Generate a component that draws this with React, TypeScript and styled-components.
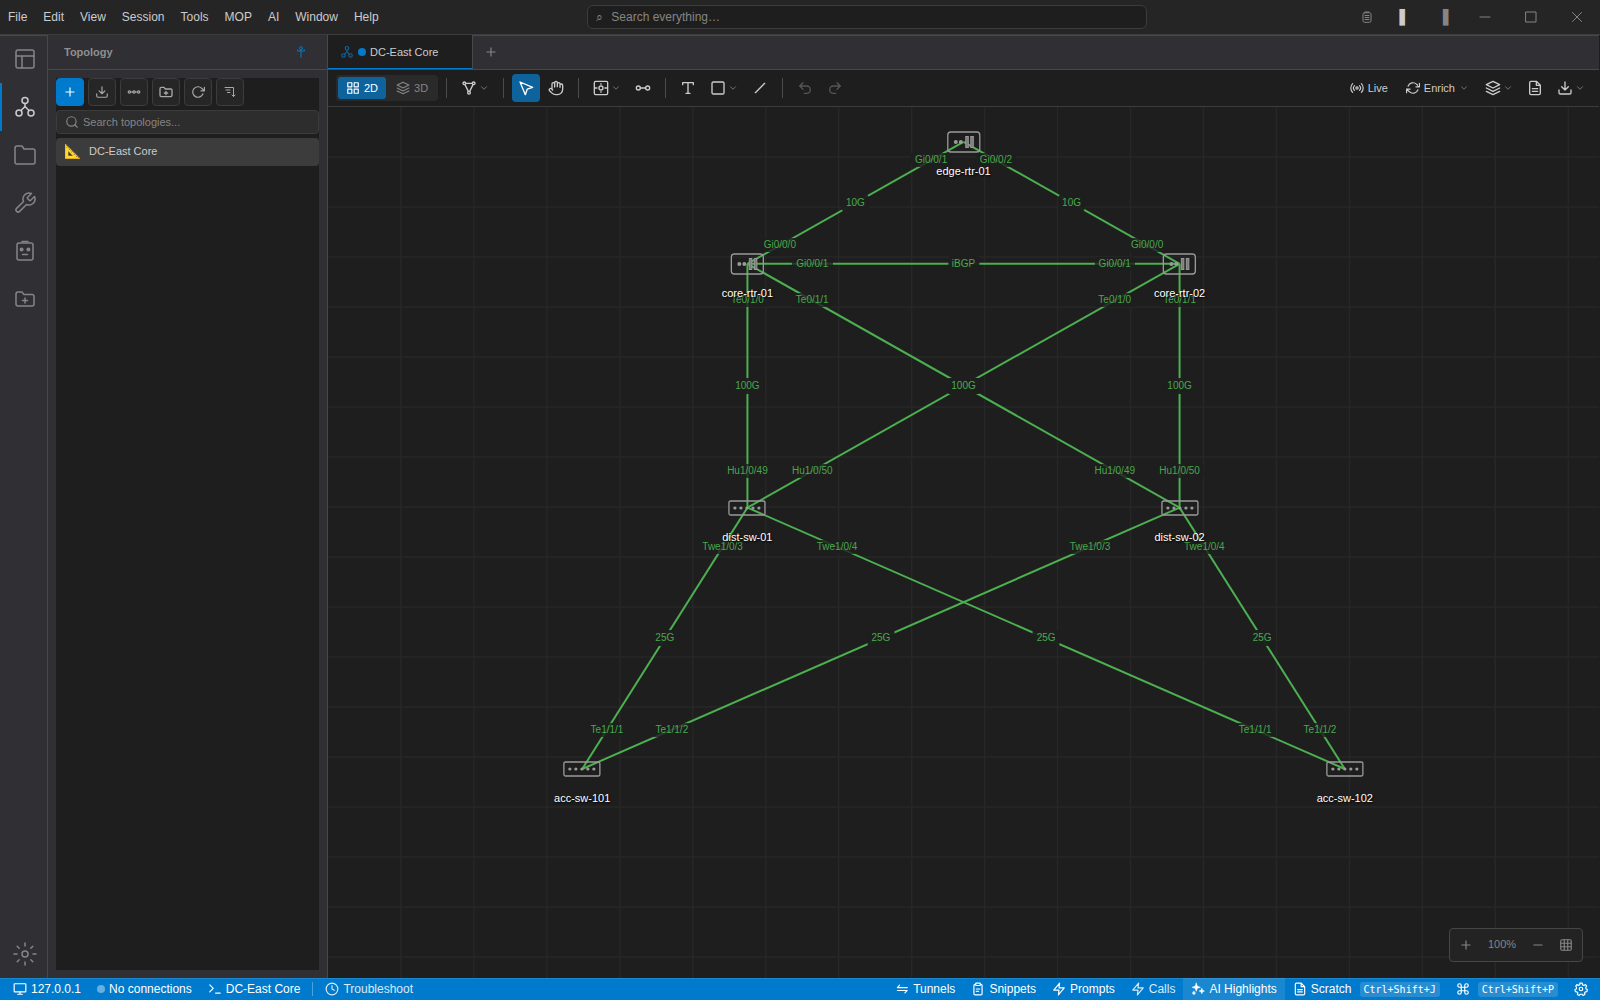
import React from "react";
import styled, { createGlobalStyle, css } from "styled-components";

const c = {
  bg: "#1e1e1e",
  title: "#252526",
  panel: "#302f34",
  line: "#48484b",
  control: "#2d2d2d",
  controlLine: "#3c3c3c",
  text: "#cccccc",
  muted: "#858585",
  accent: "#007acc",
  active: "#0e639c",
  link: "#4caf50",
};

const Global = createGlobalStyle`
  *, *::before, *::after { box-sizing: border-box; }
  html, body { margin: 0; background: ${c.bg}; }
  body, button, input { font-family: "Liberation Sans", Arial, sans-serif; }
  button { margin: 0; padding: 0; border: 0; background: none; color: inherit; cursor: pointer; }
`;

/* ---------- icons ---------- */

const Svg = styled.svg<{ $size: number; $w: number }>`
  display: block;
  flex: none;
  width: ${(p) => p.$size}px;
  height: ${(p) => p.$size}px;
  fill: none;
  stroke: currentColor;
  stroke-width: ${(p) => p.$w};
  stroke-linecap: round;
  stroke-linejoin: round;
`;

const shapes: Record<string, React.ReactNode> = {
  layout: <><rect x="3" y="3" width="18" height="18" rx="2" /><path d="M3 9h18M9 9v12" /></>,
  topology: <><circle cx="12" cy="5.5" r="3" /><circle cx="6" cy="18" r="3" /><circle cx="18" cy="18" r="3" /><path d="M12 8.5v3l-4 4M12 11.5l4 4" /></>,
  folder: <path d="M22 19a2 2 0 0 1-2 2H4a2 2 0 0 1-2-2V5a2 2 0 0 1 2-2h5l2 3h9a2 2 0 0 1 2 2z" />,
  wrench: <path d="M14.7 6.3a1 1 0 0 0 0 1.4l1.6 1.6a1 1 0 0 0 1.4 0l3.77-3.77a6 6 0 0 1-7.94 7.94l-6.91 6.91a2.12 2.12 0 0 1-3-3l6.91-6.91a6 6 0 0 1 7.94-7.94l-3.76 3.76z" />,
  robot: <><rect x="4" y="4" width="16" height="17" rx="2" /><path d="M9 2.5h6M9.5 15.5h5" /><circle cx="8.6" cy="10.5" r="1.3" fill="currentColor" /><circle cx="15.4" cy="10.5" r="1.3" fill="currentColor" /></>,
  folderPlus: <><path d="M21 17a2 2 0 0 1-2 2H5a2 2 0 0 1-2-2V7a2 2 0 0 1 2-2h4l2 2.5h8a2 2 0 0 1 2 2z" /><path d="M12 11v5M9.5 13.5h5" /></>,
  sun: <><circle cx="12" cy="12" r="3" /><path d="M12 1v3M12 20v3M1 12h3M20 12h3M4.2 4.2l2 2M17.8 17.8l2 2M4.2 19.8l2-2M17.8 6.2l2-2" /></>,
  pin: <><circle cx="12" cy="4.500" r="3" /><path d="M12 8v15M5 8v2h14V8" /></>,
  plus: <path d="M12 5v14M5 12h14" />,
  minus: <path d="M5 12h14" />,
  download: <path d="M21 15v4a2 2 0 0 1-2 2H5a2 2 0 0 1-2-2v-4M7 10l5 5 5-5M12 15V3" />,
  chain: <><circle cx="4" cy="12" r="2" /><circle cx="12" cy="12" r="2" /><circle cx="20" cy="12" r="2" /><path d="M6 12h4M14 12h4" /></>,
  refresh: <path d="M23 4v6h-6M20.49 15a9 9 0 1 1-2.12-9.36L23 10" />,
  sort: <path d="M2 3h17v18M4 8h8M7 13h5M16 18l3 3 3-3" />,
  search: <><circle cx="11" cy="11" r="8" /><path d="m21 21-4.3-4.3" /></>,
  grid4: <><rect x="3" y="3" width="7" height="7" /><rect x="14" y="3" width="7" height="7" /><rect x="14" y="14" width="7" height="7" /><rect x="3" y="14" width="7" height="7" /></>,
  layers: <path d="M12 2 2 7l10 5 10-5zM2 17l10 5 10-5M2 12l10 5 10-5" />,
  triangle: <><circle cx="5" cy="5" r="2" /><circle cx="19" cy="5" r="2" /><circle cx="12" cy="19" r="2" /><path d="M7 5h10M6 7l5 10M18 7l-5 10" /></>,
  chevron: <path d="m6 9 6 6 6-6" />,
  pointer: <path d="m3 3 8 19 2.800-8.200L22 11z" />,
  hand: <path d="M18 11V6a2 2 0 0 0-4 0M14 10V4a2 2 0 0 0-4 0v2M10 10.5V6a2 2 0 0 0-4 0v8M18 8a2 2 0 1 1 4 0v6a8 8 0 0 1-8 8h-2c-2.8 0-4.5-.86-5.99-2.34l-3.6-3.6a2 2 0 0 1 2.83-2.82L7 15" />,
  device: <><rect x="2" y="2" width="20" height="20" rx="2" /><circle cx="12" cy="12" r="3" /><path d="M12 5.500v1M12 17.500v1M3 12h3M18 12h3" /></>,
  connector: <><circle cx="5" cy="12" r="3" /><circle cx="19" cy="12" r="3" /><path d="M8 12h8" /></>,
  text: <path d="M4 7V4h16v3M9 20h6M12 4v16" />,
  square: <rect x="3" y="3" width="18" height="18" rx="2" />,
  line: <path d="M5 19 19 5" />,
  undoArrow: <path d="M9 14 4 9l5-5M4 9h10.5a5.5 5.5 0 0 1 0 11H11" />,
  redoArrow: <path d="m15 14 5-5-5-5M20 9H9.5a5.5 5.5 0 0 0 0 11H13" />,
  live: <><circle cx="12" cy="12" r="2" /><path d="M16.2 7.8a6 6 0 0 1 0 8.4M7.8 16.2a6 6 0 0 1 0-8.4M19.5 4.5a10.6 10.6 0 0 1 0 15M4.5 19.5a10.6 10.6 0 0 1 0-15" /></>,
  sync: <path d="M23 4v6h-6M1 20v-6h6M3.51 9a9 9 0 0 1 14.85-3.36L23 10M1 14l4.64 4.36A9 9 0 0 0 20.49 15" />,
  file: <path d="M14 2H6a2 2 0 0 0-2 2v16a2 2 0 0 0 2 2h12a2 2 0 0 0 2-2V8zM14 2v6h6M8 13h8M8 17h8" />,
  clipboard: <><path d="M16 4h1a2 2 0 0 1 2 2v14a2 2 0 0 1-2 2H7a2 2 0 0 1-2-2V6a2 2 0 0 1 2-2h1" /><rect x="8" y="2" width="8" height="4" rx="1" /><path d="M9 12h6M9 16h4" /></>,
  clipList: <><rect x="4" y="3.5" width="16" height="19" rx="3" /><path d="M8 2h8M8 9h8M8 13h8M8 17h8" /></>,
  winMin: <path d="M2 12h20" />,
  winMax: <rect x="2" y="2" width="20" height="20" />,
  winClose: <path d="m3 3 18 18M21 3 3 21" />,
  monitor: <><rect x="2" y="3" width="20" height="14" rx="1" /><path d="M8 21h8M12 17v4" /></>,
  terminal: <path d="m3 5 6 6-6 6M13 19h8" />,
  clock: <><circle cx="12" cy="12" r="10" /><path d="M12 6v6l4 2" /></>,
  tunnels: <path d="M21 9.500H4l4-4M4 14.500h17l-4 4" />,
  bolt: <path d="M13 2 3 14h9l-1 8 10-12h-9z" />,
  sparkles: <path fill="currentColor" d="m9 2 1.8 5.2L16 9l-5.2 1.8L9 16l-1.8-5.2L2 9l5.2-1.8zM18.500 11l1.300 3.200L23 15.500l-3.200 1.300L18.500 20l-1.300-3.200L14 15.500l3.200-1.300zM5 16l1 2 2 1-2 1-1 2-1-2-2-1 2-1z" />,
  command: <path d="M18 3a3 3 0 0 0-3 3v12a3 3 0 1 0 3-3H6a3 3 0 1 0 3 3V6a3 3 0 1 0-3 3h12a3 3 0 0 0 0-6z" />,
  gear: <><circle cx="12" cy="12" r="3" /><path d="m10 2h4l.7 2.900 2.400 1 2.600-1.500 2 2.800-1.600 2.300.6 2.500 2.300.8-.8 3.700-2.700.3-1.600 2.100.8 2.600-3.200 1.500-1.900-2h-2.700l-2 2-3.200-1.500.8-2.700-1.600-2-2.600-.4-.7-3.600 2.400-.9.500-2.500-1.500-2.300 2-2.700 2.500 1.400 2.400-1z" /></>,
  table: <><rect x="3" y="3" width="18" height="18" rx="2" /><path d="M3 9h18M3 15h18M9 3v18M15 3v18" /></>,
};

function Icon({ name, size = 16, w = 2 }: { name: string; size?: number; w?: number }) {
  return <Svg viewBox="0 0 24 24" $size={size} $w={w} aria-hidden="true">{shapes[name]}</Svg>;
}

/* ---------- frame ---------- */

const Shell = styled.div`
  display: flex;
  flex-direction: column;
  height: 100vh;
  background: ${c.bg};
  color: ${c.text};
  font-size: 12px;
  overflow: hidden;
`;

const TitleBar = styled.header`
  display: flex;
  align-items: stretch;
  height: 35px;
  flex: none;
  background: ${c.title};
  border-bottom: 1px solid ${c.controlLine};
`;

const MenuBar = styled.nav`display: flex;`;

const MenuItem = styled.button`
  padding: 0 8px;
  font-size: 12px;
`;

const TitleCenter = styled.div`
  flex: 1;
  display: flex;
  align-items: center;
  justify-content: center;
`;

const GlobalSearch = styled.label`
  display: flex;
  align-items: center;
  gap: 6px;
  width: 100%;
  max-width: 560px;
  height: 24px;
  padding: 0 8px;
  background: ${c.bg};
  border: 1px solid ${c.controlLine};
  border-radius: 6px;
  color: ${c.muted};
`;

const Field = styled.input<{ $size: number }>`
  flex: 1;
  min-width: 0;
  padding: 0;
  border: 0;
  outline: 0;
  background: none;
  color: ${c.text};
  font-size: ${(p) => p.$size}px;
  &::placeholder { color: ${c.muted}; opacity: 1; }
`;

const Lens = styled.span`
  font-size: 12px;
  line-height: 12px;
  width: 9px;
`;

const WindowTools = styled.div`display: flex;`;

const WindowButton = styled.button<{ $wide?: boolean; $bright?: boolean }>`
  display: grid;
  place-items: center;
  width: ${(p) => (p.$wide ? 46 : 38)}px;
  color: ${(p) => (p.$bright ? c.text : c.muted)};
  font-family: "DejaVu Sans", sans-serif;
  font-size: 14px;
  line-height: 16px;
`;

const Body = styled.div`
  flex: 1;
  min-height: 0;
  display: flex;
`;

const ActivityBar = styled.nav`
  display: flex;
  flex-direction: column;
  width: 48px;
  flex: none;
  background: ${c.panel};
  border-right: 1px solid ${c.line};
  box-shadow: inset 0 1px ${c.line};
`;

const Activity = styled.button<{ $active?: boolean; $last?: boolean }>`
  display: grid;
  place-items: center;
  height: 48px;
  padding: 0 2px;
  border-left: 2px solid ${(p) => (p.$active ? c.accent : "transparent")};
  color: ${(p) => (p.$active ? c.text : c.muted)};
  ${(p) => p.$last && css`margin-top: auto;`}
`;

const SideBar = styled.aside`
  display: flex;
  flex-direction: column;
  width: 280px;
  flex: none;
  background: ${c.panel};
  border-right: 1px solid ${c.line};
`;

const SideHeader = styled.div`
  display: flex;
  align-items: center;
  justify-content: space-between;
  height: 35px;
  padding: 0 20px 0 16px;
  border-bottom: 1px solid ${c.line};
`;

const SideTitle = styled.h2`
  margin: 0;
  font-size: 11px;
  font-weight: 700;
  color: #8f8f8f;
`;

const PinButton = styled.button`color: ${c.accent};`;

const SideContent = styled.div`
  flex: 1;
  display: flex;
  flex-direction: column;
  gap: 4px;
  margin: 8px;
  background: ${c.bg};
`;

const SideTools = styled.div`
  display: flex;
  gap: 4px;
`;

const SquareButton = styled.button<{ $primary?: boolean }>`
  display: grid;
  place-items: center;
  width: 28px;
  height: 28px;
  border-radius: 4px;
  border: 1px solid ${(p) => (p.$primary ? c.accent : c.controlLine)};
  background: ${(p) => (p.$primary ? c.accent : "#262626")};
  color: ${(p) => (p.$primary ? "#fff" : "#a8a8a8")};
`;

const SideSearch = styled.label`
  display: flex;
  align-items: center;
  gap: 4px;
  height: 24px;
  padding: 0 8px;
  border: 1px solid ${c.controlLine};
  border-radius: 4px;
  background: ${c.control};
  color: ${c.muted};
`;

const TopologyRow = styled.button`
  display: flex;
  align-items: center;
  gap: 8px;
  height: 28px;
  padding: 0 8px 2px;
  border-radius: 4px;
  background: ${c.controlLine};
  font-size: 11px;
  text-align: left;
`;

const Emoji = styled.span`
  width: 17px;
  font-size: 14px;
  line-height: 16px;
`;

const Main = styled.main`
  flex: 1;
  min-width: 0;
  display: flex;
  flex-direction: column;
  border-right: 1px solid ${c.bg};
`;

const TabBar = styled.div`
  display: flex;
  height: 35px;
  flex: none;
  background: ${c.panel};
  border-bottom: 1px solid ${c.line};
  box-shadow: inset 0 1px ${c.line};
`;

const Tab = styled.button`
  display: flex;
  align-items: center;
  gap: 4px;
  width: 145px;
  padding: 0 12px;
  background: ${c.bg};
  border-right: 1px solid ${c.line};
  border-bottom: 1px solid ${c.accent};
  font-size: 11px;
  svg { color: ${c.active}; }
`;

const Dot = styled.span<{ $color: string }>`
  width: 8px;
  height: 8px;
  flex: none;
  border-radius: 50%;
  background: ${(p) => p.$color};
`;

const NewTab = styled.button`
  display: grid;
  place-items: center;
  width: 36px;
  color: ${c.muted};
`;

/* ---------- toolbar ---------- */

const Toolbar = styled.div`
  display: flex;
  align-items: center;
  gap: 2px;
  flex: none;
  height: 37px;
  padding: 0 8px;
  border-bottom: 1px solid ${c.controlLine};
`;

const Spacer = styled.div`flex: 1;`;

const Segment = styled.div`
  display: flex;
  gap: 2px;
  padding: 2px;
  border-radius: 4px;
  background: #2a2a2b;
`;

const SegmentButton = styled.button<{ $active?: boolean }>`
  display: flex;
  align-items: center;
  gap: 4px;
  height: 22px;
  padding: 0 8px;
  border-radius: 3px;
  background: ${(p) => (p.$active ? c.active : "transparent")};
  color: ${(p) => (p.$active ? "#fff" : c.muted)};
  font-size: 11px;
`;

const ToolButton = styled.button<{ $active?: boolean; $dim?: boolean }>`
  display: flex;
  align-items: center;
  justify-content: center;
  gap: 2px;
  height: 28px;
  padding: 0 6px;
  border-radius: 4px;
  background: ${(p) => (p.$active ? c.active : "transparent")};
  color: ${(p) => (p.$active ? "#fff" : p.$dim ? "#555" : c.text)};
`;

const LabelButton = styled(ToolButton)`
  gap: 4px;
  padding: 0 8px;
  font-size: 11px;
`;

const Caret = styled.span`color: ${c.muted};`;

const Rule = styled.span`
  width: 1px;
  height: 20px;
  margin: 0 6px;
  background: #4a4a4a;
`;

/* ---------- canvas ---------- */

const Canvas = styled.section`
  position: relative;
  flex: 1;
  min-height: 0;
  overflow: hidden;
`;

const Wires = styled.svg`
  position: absolute;
  inset: 0;
  width: 100%;
  height: 100%;
  .grid { stroke: #272727; stroke-width: 1.5; }
  .wire { stroke: ${c.link}; stroke-width: 2; }
`;

const WireLabel = styled.span<{ $mid?: boolean }>`
  position: absolute;
  transform: translate(-50%, -50%);
  padding: 0 4px;
  border-radius: 2px;
  line-height: ${(p) => (p.$mid ? 16 : 14)}px;
  font-size: 10px;
  color: ${c.link};
  background: ${(p) => (p.$mid ? c.bg : "rgba(30, 30, 30, 0.85)")};
  opacity: 0.95;
  white-space: nowrap;
`;

const Device = styled.div`
  position: absolute;
  display: flex;
  flex-direction: column;
  align-items: center;
  gap: 11px;
  transform: translate(-50%, -12px);
  font-size: 11px;
  line-height: 12px;
  color: #fff;
  text-shadow: 1px 1px 2px #000;
  white-space: nowrap;
`;

const DeviceArt = styled.svg`
  display: block;
  width: 40px;
  height: 24px;
  fill: none;
  stroke: #9a9a9a;
  .solid { fill: #9a9a9a; stroke: none; }
  .bar { fill: #7a7a7a; }
`;

const ZoomBox = styled.div`
  position: absolute;
  right: 16px;
  bottom: 16px;
  display: flex;
  align-items: center;
  height: 34px;
  padding: 0 2px;
  border: 1px solid #464646;
  border-radius: 4px;
  background: #232323;
  color: ${c.muted};
  font-size: 11px;
`;

const ZoomButton = styled.button`
  display: grid;
  place-items: center;
  width: 28px;
  height: 28px;
`;

const ZoomValue = styled.output`
  width: 44px;
  padding-bottom: 2px;
  text-align: center;
`;

type Node = { x: number; y: number; kind: "router" | "switch" };

const nodes: Record<string, Node> = {
  "edge-rtr-01": { x: 50, y: 4, kind: "router" },
  "core-rtr-01": { x: 33, y: 18, kind: "router" },
  "core-rtr-02": { x: 67, y: 18, kind: "router" },
  "dist-sw-01": { x: 33, y: 46, kind: "switch" },
  "dist-sw-02": { x: 67, y: 46, kind: "switch" },
  "acc-sw-101": { x: 20, y: 76, kind: "switch" },
  "acc-sw-102": { x: 80, y: 76, kind: "switch" },
};

const links: [string, string, string, string, string][] = [
  ["edge-rtr-01", "core-rtr-01", "Gi0/0/1", "10G", "Gi0/0/0"],
  ["edge-rtr-01", "core-rtr-02", "Gi0/0/2", "10G", "Gi0/0/0"],
  ["core-rtr-01", "core-rtr-02", "Gi0/0/1", "iBGP", "Gi0/0/1"],
  ["core-rtr-01", "dist-sw-01", "Te0/1/0", "100G", "Hu1/0/49"],
  ["core-rtr-01", "dist-sw-02", "Te0/1/1", "100G", "Hu1/0/49"],
  ["core-rtr-02", "dist-sw-01", "Te0/1/0", "100G", "Hu1/0/50"],
  ["core-rtr-02", "dist-sw-02", "Te0/1/1", "100G", "Hu1/0/50"],
  ["dist-sw-01", "acc-sw-101", "Twe1/0/3", "25G", "Te1/1/1"],
  ["dist-sw-01", "acc-sw-102", "Twe1/0/4", "25G", "Te1/1/1"],
  ["dist-sw-02", "acc-sw-101", "Twe1/0/3", "25G", "Te1/1/2"],
  ["dist-sw-02", "acc-sw-102", "Twe1/0/4", "25G", "Te1/1/2"],
];

const GRID_STEP = 5.74;
const gridStops = Array.from({ length: 17 }, (_, i) => `${((i + 1) * GRID_STEP).toFixed(2)}%`);

function along(a: Node, b: Node, t: number) {
  return { left: `${a.x + (b.x - a.x) * t}%`, top: `${a.y + (b.y - a.y) * t}%` };
}

function TopologyCanvas() {
  return (
    <Canvas aria-label="DC-East Core">
      <Wires>
        {gridStops.map((s) => (
          <React.Fragment key={s}>
            <line className="grid" x1={s} x2={s} y1="0" y2="100%" />
            <line className="grid" x1="0" x2="100%" y1={s} y2={s} />
          </React.Fragment>
        ))}
        {links.map(([a, b]) => (
          <line
            key={a + b}
            className="wire"
            x1={`${nodes[a].x}%`}
            y1={`${nodes[a].y}%`}
            x2={`${nodes[b].x}%`}
            y2={`${nodes[b].y}%`}
          />
        ))}
      </Wires>
      {links.map(([a, b, from, speed, to]) => (
        <React.Fragment key={a + b}>
          <WireLabel style={along(nodes[a], nodes[b], 0.15)}>{from}</WireLabel>
          <WireLabel $mid style={along(nodes[a], nodes[b], 0.5)}>{speed}</WireLabel>
          <WireLabel style={along(nodes[a], nodes[b], 0.85)}>{to}</WireLabel>
        </React.Fragment>
      ))}
      {Object.entries(nodes).map(([name, n]) => (
        <Device key={name} style={{ left: `${n.x}%`, top: `${n.y}%` }}>
          <DeviceArt viewBox="-20 -12 40 24" aria-hidden="true">
            {n.kind === "router" ? (
              <>
                <rect x="-16" y="-10" width="32" height="20" rx="3" strokeWidth="1.3" />
                <circle className="solid" cx="-8" cy="0" r="2" />
                <circle className="solid" cx="-3" cy="0" r="2" />
                <rect className="bar" x="2" y="-5.500" width="2.500" height="11" />
                <rect className="bar" x="7" y="-5.500" width="2.500" height="11" />
              </>
            ) : (
              <>
                <rect x="-18" y="-7" width="36" height="14" rx="1.500" strokeWidth="1.300" />
                {[-12, -6, 0, 6, 12].map((x) => <circle key={x} className="solid" cx={x} cy="0" r="1.600" />)}
              </>
            )}
          </DeviceArt>
          {name}
        </Device>
      ))}
      <ZoomBox>
        <ZoomButton aria-label="Zoom in"><Icon name="plus" size={14} /></ZoomButton>
        <ZoomValue>100%</ZoomValue>
        <ZoomButton aria-label="Zoom out"><Icon name="minus" size={14} /></ZoomButton>
        <ZoomButton aria-label="Toggle grid"><Icon name="table" size={14} /></ZoomButton>
      </ZoomBox>
    </Canvas>
  );
}

/* ---------- status bar ---------- */

const StatusBar = styled.footer`
  display: flex;
  flex: none;
  height: 22px;
  padding: 0 4px 0 5px;
  background: ${c.accent};
  box-shadow: inset 0 1px #1a87d1;
  color: #fff;
`;

const StatusItem = styled.button<{ $lit?: boolean; $soft?: boolean }>`
  display: flex;
  align-items: center;
  gap: 4px;
  padding: 0 8px;
  font-size: 12px;
  background: ${(p) => (p.$lit ? "rgba(255, 255, 255, 0.1)" : "transparent")};
  opacity: ${(p) => (p.$soft ? 0.85 : 1)};
`;

const StatusRule = styled.span`
  width: 1px;
  height: 14px;
  margin: 0 4px;
  align-self: center;
  background: rgba(255, 255, 255, 0.3);
`;

const Key = styled.kbd`
  margin-left: 4px;
  padding: 0 4px;
  border-radius: 3px;
  background: rgba(255, 255, 255, 0.15);
  font-family: "DejaVu Sans Mono", monospace;
  font-size: 10px;
  line-height: 15px;
`;

const activities: [string, string][] = [
  ["layout", "Sessions"],
  ["topology", "Topology"],
  ["folder", "Files"],
  ["wrench", "Tools"],
  ["robot", "Agents"],
  ["folderPlus", "Workspaces"],
];

const sideTools: [string, string, number][] = [
  ["plus", "New topology", 14],
  ["download", "Import", 14],
  ["chain", "Discover", 14],
  ["folderPlus", "New folder", 16],
  ["refresh", "Refresh", 14],
  ["sort", "Sort", 12],
];

function Tool({ icon, label, menu, size = 16, w = 2, ...rest }: {
  icon: string; label: string; menu?: boolean; size?: number; w?: number; $active?: boolean; $dim?: boolean;
}) {
  return (
    <ToolButton aria-label={label} {...rest}>
      <Icon name={icon} size={size} w={w} />
      {menu && <Caret><Icon name="chevron" size={10} /></Caret>}
    </ToolButton>
  );
}

export default function App() {
  return (
    <Shell>
      <Global />
      <TitleBar>
        <MenuBar aria-label="Menu">
          {["File", "Edit", "View", "Session", "Tools", "MOP", "AI", "Window", "Help"].map((m) => (
            <MenuItem key={m}>{m}</MenuItem>
          ))}
        </MenuBar>
        <TitleCenter>
          <GlobalSearch>
            <Lens>⌕</Lens>
            <Field $size={12} placeholder="Search everything…" aria-label="Search everything" />
          </GlobalSearch>
        </TitleCenter>
        <WindowTools>
          <WindowButton aria-label="Clipboard"><Icon name="clipList" size={12} w={2} /></WindowButton>
          <WindowButton $bright>▌</WindowButton>
          <WindowButton>▐</WindowButton>
          <WindowButton $wide aria-label="Minimize"><Icon name="winMin" size={12} /></WindowButton>
          <WindowButton $wide aria-label="Maximize"><Icon name="winMax" size={12} /></WindowButton>
          <WindowButton $wide aria-label="Close"><Icon name="winClose" size={12} /></WindowButton>
        </WindowTools>
      </TitleBar>

      <Body>
        <ActivityBar aria-label="Activity">
          {activities.map(([icon, label]) => (
            <Activity key={icon} $active={icon === "topology"} aria-label={label}>
              <Icon name={icon} size={24} w={1.5} />
            </Activity>
          ))}
          <Activity $last aria-label="Settings"><Icon name="sun" size={24} w={1.5} /></Activity>
        </ActivityBar>

        <SideBar>
          <SideHeader>
            <SideTitle>Topology</SideTitle>
            <PinButton aria-label="Pin panel"><Icon name="pin" size={12} /></PinButton>
          </SideHeader>
          <SideContent>
            <SideTools>
              {sideTools.map(([icon, label, size], i) => (
                <SquareButton key={icon} $primary={i === 0} aria-label={label}>
                  <Icon name={icon} size={size} />
                </SquareButton>
              ))}
            </SideTools>
            <SideSearch>
              <Icon name="search" size={14} />
              <Field $size={11} placeholder="Search topologies..." aria-label="Search topologies" />
            </SideSearch>
            <TopologyRow><Emoji>📐</Emoji>DC-East Core</TopologyRow>
          </SideContent>
        </SideBar>

        <Main>
          <TabBar>
            <Tab>
              <Icon name="topology" size={14} />
              <Dot $color={c.accent} />
              DC-East Core
            </Tab>
            <NewTab aria-label="New tab"><Icon name="plus" size={14} /></NewTab>
          </TabBar>
          <Toolbar>
            <Segment>
              <SegmentButton $active><Icon name="grid4" size={14} />2D</SegmentButton>
              <SegmentButton><Icon name="layers" size={14} />3D</SegmentButton>
            </Segment>
            <Rule />
            <Tool icon="triangle" label="Layout" menu />
            <Rule />
            <Tool icon="pointer" label="Select" $active />
            <Tool icon="hand" label="Pan" />
            <Rule />
            <Tool icon="device" label="Add device" menu />
            <Tool icon="connector" label="Connect" />
            <Rule />
            <Tool icon="text" label="Text" />
            <Tool icon="square" label="Shape" menu />
            <Tool icon="line" label="Line" />
            <Rule />
            <Tool icon="undoArrow" label="Undo" $dim />
            <Tool icon="redoArrow" label="Redo" $dim />
            <Spacer />
            <LabelButton><Icon name="live" size={14} />Live</LabelButton>
            <LabelButton>
              <Icon name="sync" size={14} />Enrich
              <Caret><Icon name="chevron" size={10} /></Caret>
            </LabelButton>
            <Tool icon="layers" label="Layers" menu />
            <Tool icon="file" label="Notes" />
            <Tool icon="download" label="Export" menu />
          </Toolbar>
          <TopologyCanvas />
        </Main>
      </Body>

      <StatusBar>
        <StatusItem><Icon name="monitor" size={14} />127.0.0.1</StatusItem>
        <StatusItem><Dot $color="rgba(255, 255, 255, 0.4)" />No connections</StatusItem>
        <StatusItem><Icon name="terminal" size={14} />DC-East Core</StatusItem>
        <StatusRule />
        <StatusItem $soft><Icon name="clock" size={14} />Troubleshoot</StatusItem>
        <Spacer />
        <StatusItem><Icon name="tunnels" size={14} />Tunnels</StatusItem>
        <StatusItem><Icon name="clipboard" size={14} />Snippets</StatusItem>
        <StatusItem><Icon name="bolt" size={14} />Prompts</StatusItem>
        <StatusItem $soft><Icon name="bolt" size={14} />Calls</StatusItem>
        <StatusItem $lit><Icon name="sparkles" size={14} w={1} />AI Highlights</StatusItem>
        <StatusItem><Icon name="file" size={14} />Scratch<Key>Ctrl+Shift+J</Key></StatusItem>
        <StatusItem aria-label="Commands"><Icon name="command" size={14} /><Key>Ctrl+Shift+P</Key></StatusItem>
        <StatusItem aria-label="Preferences"><Icon name="gear" size={14} /></StatusItem>
      </StatusBar>
    </Shell>
  );
}
